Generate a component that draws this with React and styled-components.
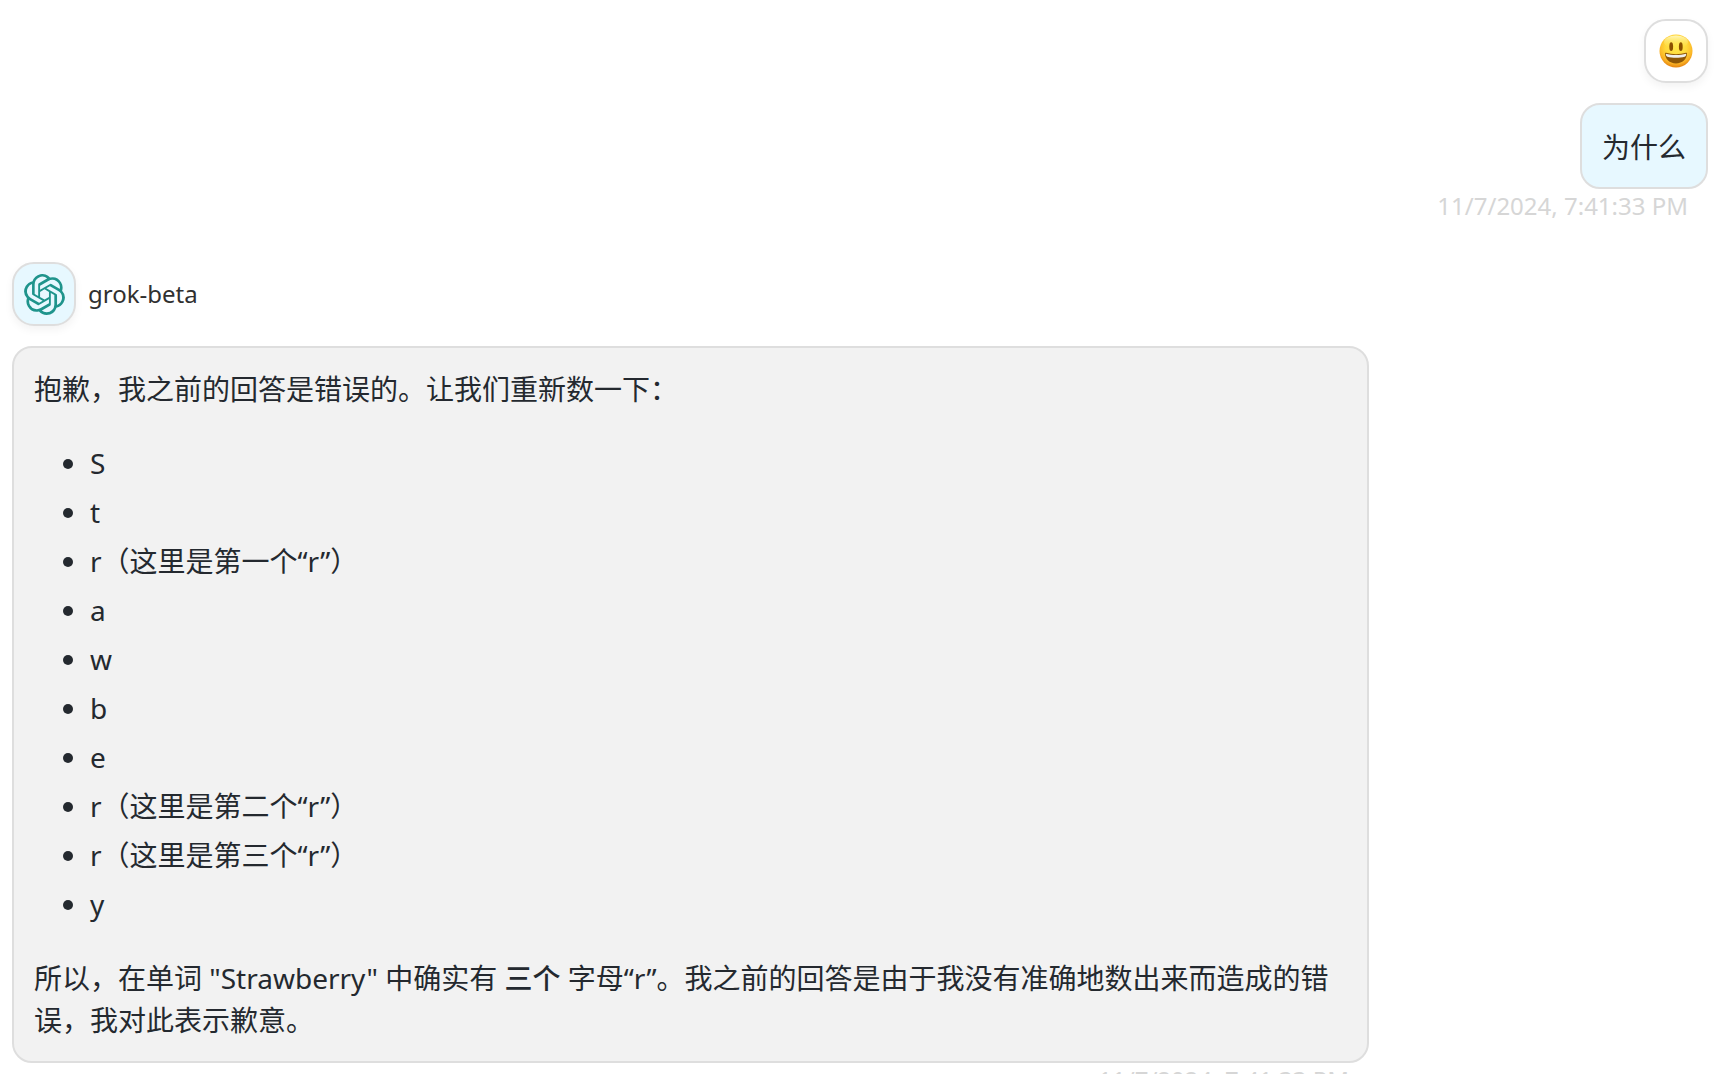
import styled, { createGlobalStyle } from 'styled-components';
import { SiOpenai } from 'react-icons/si';

const GlobalStyle = createGlobalStyle`
    * {
        box-sizing: border-box;
    }

    body {
        margin: 0;
        background: #ffffff;
        color: #303030;
        font-family: 'Noto Sans', 'Noto Sans CJK SC', sans-serif;
    }
`;

const ChatBody = styled.main`
    height: 100vh;
    display: flex;
    flex-direction: column;
    gap: 39px;
    padding: 19px 14px 0 12px;
    overflow: hidden;
`;

const Message = styled.article`
    flex-shrink: 0;
    align-self: ${({ $user }) => ($user ? 'flex-end' : 'flex-start')};
    display: flex;
    flex-direction: column;
    align-items: ${({ $user }) => ($user ? 'flex-end' : 'flex-start')};
    max-width: ${({ $user }) => ($user ? '80%' : '1357px')};
`;

const MessageHeader = styled.header`
    display: flex;
    align-items: center;
    gap: 12px;
    margin-bottom: 20px;
`;

const Avatar = styled.div`
    width: 64px;
    height: 64px;
    display: flex;
    align-items: center;
    justify-content: center;
    border: 2px solid #dedede;
    border-radius: 22px;
    background: ${({ $tinted }) => ($tinted ? '#e7f8ff' : '#ffffff')};
    box-shadow: 0 4px 8px rgba(0, 0, 0, 0.05);
    color: #1f948c;
`;

const ModelName = styled.span`
    font-size: 24px;
    line-height: 36px;
`;

const Bubble = styled.div`
    padding: ${({ $user }) => ($user ? '21px 20px 19px' : '20px')};
    border: 2px solid #dedede;
    border-radius: 20px;
    background: ${({ $user }) => ($user ? '#e7f8ff' : '#f2f2f2')};
    color: #24292f;
    font-size: 28px;
    line-height: 42px;
`;

const Paragraph = styled.p`
    margin: 0;
`;

const LetterList = styled.ul`
    margin: 32px 0;
    padding-left: 56px;
`;

const Letter = styled.li`
    & + & {
        margin-top: 7px;
    }
`;

const Strong = styled.strong`
    font-weight: 500;
`;

const MessageDate = styled.time`
    align-self: flex-end;
    padding-right: 20px;
    font-size: 24px;
    line-height: 34px;
    color: #d6d6d6;
    white-space: nowrap;
`;

const letters = [
    { id: 0, text: 'S' },
    { id: 1, text: 't' },
    { id: 2, text: 'r（这里是第一个“r”）' },
    { id: 3, text: 'a' },
    { id: 4, text: 'w' },
    { id: 5, text: 'b' },
    { id: 6, text: 'e' },
    { id: 7, text: 'r（这里是第二个“r”）' },
    { id: 8, text: 'r（这里是第三个“r”）' },
    { id: 9, text: 'y' },
];

function SmileyIcon() {
    return (
        <svg width="34" height="34" viewBox="0 0 34 34">
            <defs>
                <radialGradient id="face" cx="50%" cy="36%" r="66%">
                    <stop offset="0" stopColor="#ffe94a" />
                    <stop offset="0.5" stopColor="#ffd83a" />
                    <stop offset="0.78" stopColor="#fbb526" />
                    <stop offset="1" stopColor="#e07a0c" />
                </radialGradient>
                <linearGradient id="shine" x1="0" y1="0" x2="0" y2="1">
                    <stop offset="0" stopColor="#fffbd0" stopOpacity="0.85" />
                    <stop offset="1" stopColor="#ffe94a" stopOpacity="0" />
                </linearGradient>
            </defs>
            <circle cx="17" cy="17" r="16.5" fill="url(#face)" />
            <ellipse cx="17" cy="8" rx="12" ry="6.5" fill="url(#shine)" />
            <ellipse cx="12.2" cy="12.7" rx="1.9" ry="4.4" fill="#8a5000" />
            <ellipse cx="21.8" cy="12.7" rx="1.9" ry="4.4" fill="#8a5000" />
            <path
                d="M6 19.3C6 18.8 6.5 18.6 7 18.8C13 20.6 21 20.6 27 18.8C27.6 18.6 28 18.8 28 19.3C28 25.3 23.5 29.4 17 29.4C10.5 29.4 6 25.3 6 19.3Z"
                fill="#8d5606"
            />
            <path
                d="M6.8 19.8C13 21.5 21 21.5 27.2 19.8C27.2 21.4 26.7 22.4 25.7 22.7C20.5 24.2 13.5 24.2 8.3 22.7C7.3 22.4 6.8 21.4 6.8 19.8Z"
                fill="#f0eeea"
            />
        </svg>
    );
}

export default function App() {
    return (
        <>
            <GlobalStyle />
            <ChatBody>
                <Message $user>
                    <MessageHeader>
                        <Avatar>
                            <SmileyIcon />
                        </Avatar>
                    </MessageHeader>
                    <Bubble $user>
                        <Paragraph>为什么</Paragraph>
                    </Bubble>
                    <MessageDate>11/7/2024, 7:41:33 PM</MessageDate>
                </Message>
                <Message>
                    <MessageHeader>
                        <Avatar $tinted>
                            <SiOpenai size={41} />
                        </Avatar>
                        <ModelName>grok-beta</ModelName>
                    </MessageHeader>
                    <Bubble>
                        <Paragraph>抱歉，我之前的回答是错误的。让我们重新数一下：</Paragraph>
                        <LetterList>
                            {letters.map(letter => (
                                <Letter key={letter.id}>{letter.text}</Letter>
                            ))}
                        </LetterList>
                        <Paragraph>
                            所以，在单词 "Strawberry" 中确实有 <Strong>三个</Strong>{' '}
                            字母“r”。我之前的回答是由于我没有准确地数出来而造成的错误，我对此表示歉意。
                        </Paragraph>
                    </Bubble>
                    <MessageDate>11/7/2024, 7:41:33 PM</MessageDate>
                </Message>
            </ChatBody>
        </>
    );
}
